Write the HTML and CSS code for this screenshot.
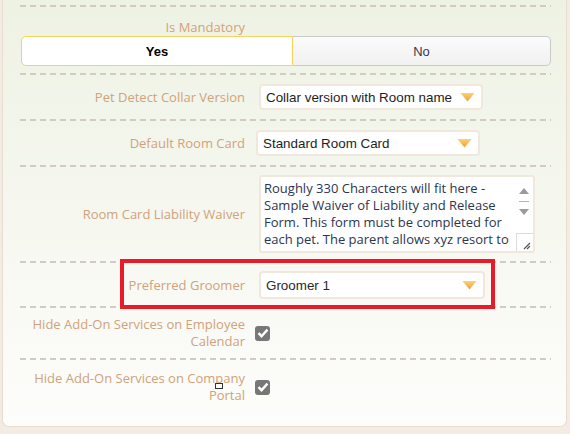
FILE: index.html
```html
<!DOCTYPE html>
<html lang="en">

<head>
    <meta charset="UTF-8">
    <meta name="viewport" content="width=device-width, initial-scale=1.0">
    <title>Pet Settings</title>
    <link rel="stylesheet" href="styles.css">
</head>

<body>
    <div class="panel">
        <div class="form">
            <div class="row row-mandatory">
                <label class="label">Is Mandatory</label>
                <div class="toggle">
                    <button class="toggle-btn active">Yes</button>
                    <button class="toggle-btn">No</button>
                </div>
            </div>

            <div class="row">
                <label class="label">Pet Detect Collar Version</label>
                <div class="select select-collar">
                    <span>Collar version with Room name</span>
                    <span class="arrow"></span>
                </div>
            </div>

            <div class="row">
                <label class="label">Default Room Card</label>
                <div class="select select-card">
                    <span>Standard Room Card</span>
                    <span class="arrow"></span>
                </div>
            </div>

            <div class="row row-waiver">
                <label class="label">Room Card Liability Waiver</label>
                <div class="waiver">
                    <div class="waiver-text">Roughly 330 Characters will fit here - Sample Waiver of Liability and Release Form. This form must be completed for each pet. The parent allows xyz resort to</div>
                    <div class="waiver-scroll">
                        <span class="scroll-up"></span>
                        <span class="scroll-line"></span>
                        <span class="scroll-down"></span>
                        <span class="scroll-grip">
                            <svg width="9" height="9" viewBox="0 0 9 9">
                                <path d="M8 2 L2 8 M8 5 L5 8" stroke="#555" stroke-width="1.2" fill="none" />
                            </svg>
                        </span>
                    </div>
                </div>
            </div>

            <div class="row row-groomer">
                <div class="highlight"></div>
                <label class="label">Preferred Groomer</label>
                <div class="select select-groomer">
                    <span>Groomer 1</span>
                    <span class="arrow"></span>
                </div>
            </div>

            <div class="row row-check">
                <label class="label">Hide Add-On Services on Employee Calendar</label>
                <span class="checkbox">
                    <svg width="12" height="10" viewBox="0 0 12 10">
                        <path d="M1.5 5.2 L4.5 8.2 L10.5 1.6" stroke="#fff" stroke-width="2.4" fill="none" />
                    </svg>
                </span>
            </div>

            <div class="row row-check row-last">
                <label class="label">Hide Add-On Services on Company <span class="portal">P<span class="cursor-icon"></span>ortal</span></label>
                <span class="checkbox">
                    <svg width="12" height="10" viewBox="0 0 12 10">
                        <path d="M1.5 5.2 L4.5 8.2 L10.5 1.6" stroke="#fff" stroke-width="2.4" fill="none" />
                    </svg>
                </span>
            </div>
        </div>
    </div>
</body>

</html>
```

FILE: styles.css
```css
body {
    margin: 0;
    padding: 0;
    background-color: #f3ece4;
    font-family: "Open Sans", "Noto Sans", sans-serif;
}

.panel {
    height: 427px;
    margin: 0 3px 0 2px;
    padding: 0 15px 0 17px;
    box-sizing: border-box;
    background: linear-gradient(to bottom, #eef2e3, #fdfdfb);
    border: 1px solid #e9ddd0;
    border-top: none;
    border-radius: 0 0 7px 7px;
}

.form {
    padding-top: 5px;
}

.row {
    position: relative;
    display: flex;
    align-items: center;
    gap: 13px;
    padding: 9px 0;
    border-top: 2px solid transparent;
    background-image: linear-gradient(to right, #d1cbc2 6px, transparent 6px);
    background-size: 10px 2px;
    background-repeat: repeat-x;
    background-position: 0 0;
    background-origin: border-box;
}

.label {
    display: block;
    width: 225px;
    flex-shrink: 0;
    text-align: right;
    color: #d1a27b;
    font-size: 13px;
    line-height: 17px;
}

/* Is Mandatory */
.row-mandatory {
    display: block;
    padding: 11px 0 7px 1px;
}

.row-mandatory .label {
    width: 224px;
    line-height: 18px;
}

.toggle {
    display: flex;
    height: 30px;
}

.toggle-btn {
    flex: 1;
    padding: 0;
    font-family: "Liberation Sans", Arial, sans-serif;
    font-size: 13px;
    color: #3b3845;
    background: linear-gradient(to bottom, #fbfbfb, #f1f1f1);
    border: 1px solid #c9c9c9;
    border-left: none;
    border-radius: 0 5px 5px 0;
}

.toggle-btn.active {
    flex: none;
    width: 272px;
    background: #fff;
    color: #000;
    font-weight: bold;
    border: 1px solid #f6d35c;
    border-radius: 5px 0 0 5px;
}

/* Selects */
.select {
    display: flex;
    align-items: center;
    justify-content: space-between;
    width: 224px;
    height: 26px;
    box-sizing: border-box;
    padding: 0 6px 0 5px;
    background: #fff;
    border: 2px solid #f1e7dd;
    border-radius: 4px;
    font-family: "Liberation Sans", Arial, sans-serif;
    font-size: 13.4px;
    color: #1e1e1e;
    white-space: nowrap;
}

.select-collar {
    margin-left: 1px;
}

.select-card {
    margin-left: -2px;
}

.select-groomer {
    width: 226px;
    height: 28px;
    margin-left: 1px;
    color: #2a2a2a;
}

.arrow {
    flex-shrink: 0;
    width: 15px;
    height: 9px;
    background: linear-gradient(to bottom, #fcd270, #f39a38);
    clip-path: polygon(0 0, 100% 0, 50% 100%);
}

/* Waiver textarea */
.row-waiver {
    padding: 8px 0;
}

.waiver {
    display: flex;
    width: 276px;
    height: 78px;
    box-sizing: border-box;
    margin-left: 1px;
    background: #fff;
    border: 2px solid #f1e7dd;
    border-radius: 3px;
    overflow: hidden;
}

.waiver-text {
    flex: 1;
    padding: 3px 0 0 3px;
    font-size: 13px;
    line-height: 17px;
    color: #2d3550;
    overflow: hidden;
}

.waiver-scroll {
    position: relative;
    width: 18px;
    display: flex;
    flex-direction: column;
    align-items: center;
}

.scroll-up,
.scroll-down {
    width: 0;
    height: 0;
    border-left: 5px solid transparent;
    border-right: 5px solid transparent;
}

.scroll-up {
    margin-top: 11px;
    border-bottom: 6px solid #9b9b9b;
}

.scroll-line {
    width: 10px;
    height: 1px;
    margin: 7px 0;
    background: #b5b5b5;
}

.scroll-down {
    border-top: 6px solid #9b9b9b;
}

.scroll-grip {
    position: absolute;
    right: 0;
    bottom: 0;
    display: flex;
    align-items: flex-end;
    justify-content: flex-end;
    width: 17px;
    height: 18px;
    box-sizing: border-box;
    padding: 0 2px 1px 0;
    border-left: 1px solid #dcdcdc;
    border-top: 1px solid #dcdcdc;
}

/* Groomer highlight */
.row-groomer {
    z-index: 1;
    padding: 8px 0 7px;
}

.highlight {
    position: absolute;
    left: 100px;
    top: -4px;
    width: 375px;
    height: 50px;
    box-sizing: border-box;
    border: 4px solid #e81c28;
}

/* Checkboxes */
.row-check {
    padding: 8px 0;
}

.row-last {
    padding-top: 10px;
}

.checkbox {
    display: flex;
    align-items: center;
    justify-content: center;
    width: 15px;
    height: 15px;
    margin-left: -3px;
    background: #777;
    border-radius: 3px;
}

.portal {
    position: relative;
}

.cursor-icon {
    position: absolute;
    left: 6px;
    top: -3px;
    width: 6px;
    height: 4px;
    border: 1px solid #333;
    background: #fff;
}
```
